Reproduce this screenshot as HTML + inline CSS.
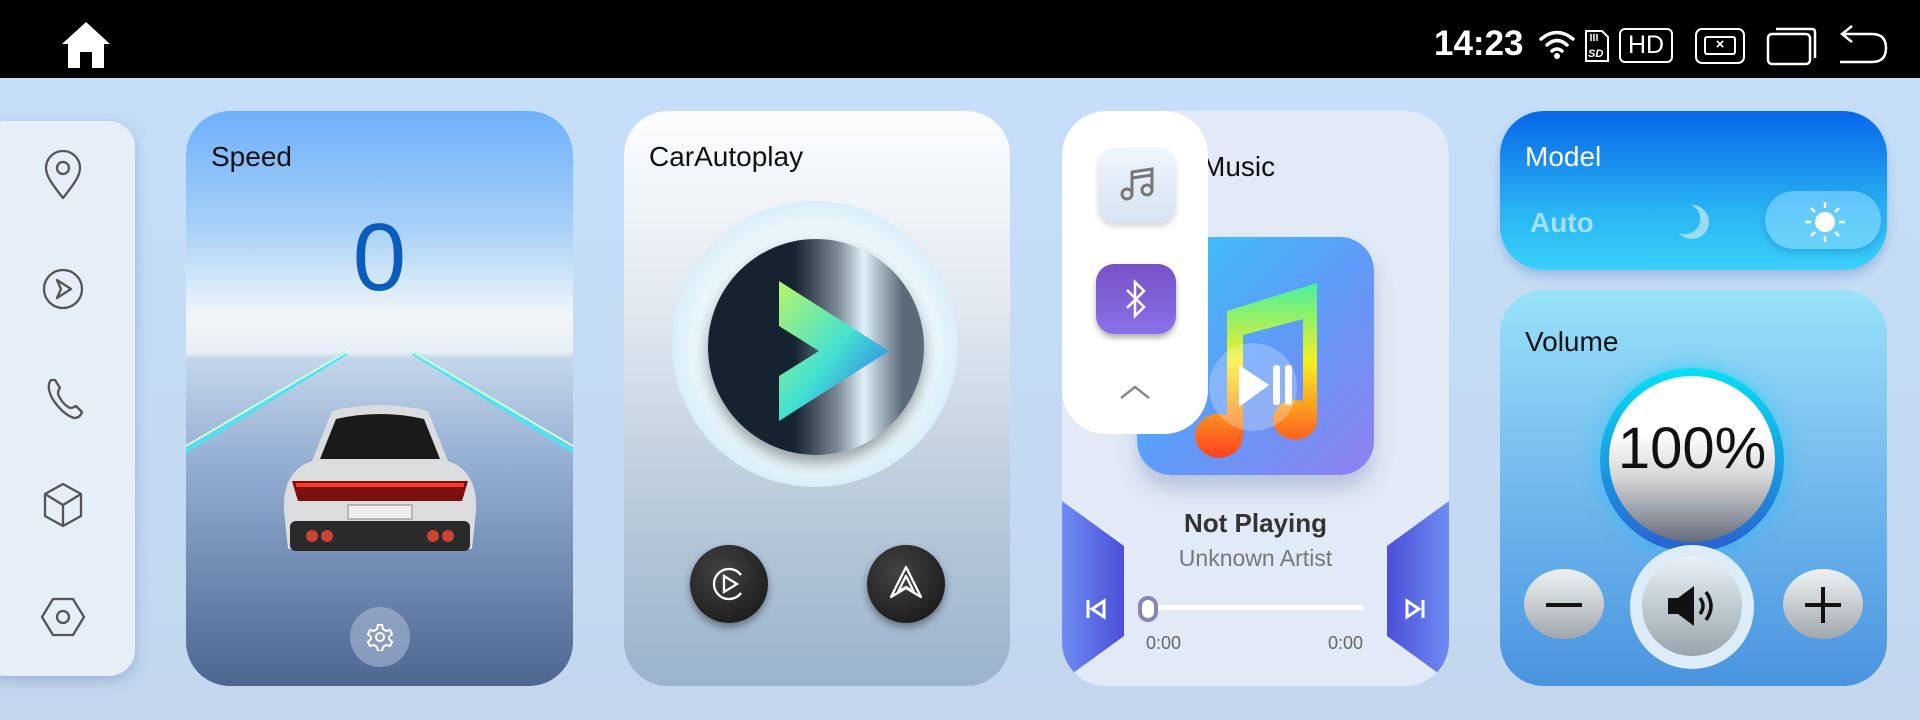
<!DOCTYPE html>
<html><head><meta charset="utf-8"><style>
*{margin:0;padding:0;box-sizing:border-box}
body{width:1920px;height:720px;overflow:hidden;background:linear-gradient(#c6e0fa,#c3d6ee);font-family:"Liberation Sans",sans-serif;position:relative}
.abs{position:absolute}
.top{left:0;top:0;width:1920px;height:78px;background:#000}
.card{position:absolute;border-radius:44px;overflow:hidden}
.t{position:absolute;font-size:28px;color:#111}
.circ{position:absolute;border-radius:50%}
</style></head><body>
<div class="abs top">
<svg class="abs" style="left:60px;top:20px" width="52" height="50" viewBox="0 0 52 50"><path d="M26 2 L50 24 L44 24 L44 48 L32 48 L32 32 L20 32 L20 48 L8 48 L8 24 L2 24 Z" fill="#fff"/></svg>
<div class="abs" style="left:1434px;top:24px;color:#fff;font-size:35px;font-weight:bold">14:23</div>
<svg class="abs" style="left:1537px;top:28px" width="40" height="32" viewBox="0 0 40 32"><g fill="none" stroke="#fff" stroke-width="3.5" stroke-linecap="round"><path d="M4 11 Q20 -2 36 11"/><path d="M10 17 Q20 8 30 17"/><path d="M15 23 Q20 19 25 23"/></g><circle cx="20" cy="28" r="3" fill="#fff"/></svg>
<svg class="abs" style="left:1584px;top:29px" width="26" height="34" viewBox="0 0 26 34"><path d="M2 2 H18 L24 8 V32 H2 Z" fill="none" stroke="#fff" stroke-width="2"/><path d="M7 5v7M10 5v7M13 5v7" stroke="#fff" stroke-width="1.5"/><text x="4" y="28" font-size="11" font-weight="bold" font-style="italic" fill="#fff" font-family="Liberation Sans">SD</text></svg>
<div class="abs" style="left:1619px;top:28px;width:54px;height:35px;border:2.5px solid #fff;border-radius:6px;color:#fff;font-size:25px;line-height:30px;text-align:center">HD</div>
<div class="abs" style="left:1695px;top:28px;width:50px;height:36px;border:2.5px solid #fff;border-radius:7px"><div style="margin:6px auto 0;width:32px;height:19px;border:2.5px solid #fff;border-radius:3px;color:#fff;font-size:15px;line-height:13px;text-align:center;font-weight:bold">×</div></div>
<svg class="abs" style="left:1766px;top:26px" width="52" height="40" viewBox="0 0 52 40"><rect x="2" y="8" width="42" height="30" rx="4" fill="none" stroke="#fff" stroke-width="2.5"/><path d="M10 3 H46 Q49 3 49 6 V32" fill="none" stroke="#fff" stroke-width="2.5"/></svg>
<svg class="abs" style="left:1838px;top:22px" width="52" height="42" viewBox="0 0 52 42"><path d="M14 4 L4 12 L14 20 M4 12 H34 Q48 12 48 26 Q48 40 34 40 H2" fill="none" stroke="#fff" stroke-width="2.5"/></svg>
</div>

<!-- sidebar -->
<div class="abs" style="left:-20px;top:121px;width:155px;height:555px;border-radius:26px;background:#e6eef8;box-shadow:0 4px 14px rgba(80,110,160,.35)"></div>
<svg class="abs" style="left:40px;top:150px" width="46" height="500" viewBox="0 0 46 500" fill="none" stroke="#555" stroke-width="2.3" stroke-linejoin="round">
<path d="M23 48 C12 34 6 26 6 18 A17 17 0 0 1 40 18 C40 26 34 34 23 48Z"/><circle cx="23" cy="18" r="6"/>
<circle cx="23" cy="139" r="19"/><path d="M17 130 L31 139 L17 148 L21 139Z"/>
<path d="M11 230 Q6 236 12 248 Q22 264 34 268 Q40 268 42 262 L36 256 Q33 258 30 258 Q22 254 18 244 Q18 240 20 238 L15 230 Z"/>
<path d="M23 334 L41 344 V366 L23 376 L5 366 V344 Z M5 344 L23 355 L41 344 M23 355 V376"/>
<path d="M13 449 H33 L44 467 L33 485 H13 L2 467 Z"/><circle cx="23" cy="467" r="6"/>
</svg>

<!-- speed card -->
<div class="card" style="left:186px;top:111px;width:387px;height:575px;background:linear-gradient(#6fb0fb 0%,#a6d0f8 20%,#f2f6f8 36%,#e6eef5 42%,#c4d6ea 43%,#92acd2 62%,#4c6690 100%)">
<svg class="abs" style="left:0;top:240px" width="387" height="120" viewBox="0 0 387 120"><path d="M160 2 L0 100 M227 2 L387 100" stroke="#4ee3f0" stroke-width="4"/><path d="M162 0 L0 95 M225 0 L387 95" stroke="#c8ffe0" stroke-width="2"/></svg>
<div class="t" style="left:25px;top:30px">Speed</div>
<div class="abs" style="left:0;width:387px;top:92px;text-align:center;font-size:96px;color:#0b5dbd">0</div>
<svg class="abs" style="left:96px;top:290px" width="196" height="160" viewBox="0 0 196 160">
<path d="M50 10 Q98 -2 146 10 L166 60 Q196 70 194 110 L190 148 L6 148 L2 110 Q0 70 30 60Z" fill="#dadcde"/>
<path d="M54 18 Q98 8 142 18 L158 58 L38 58Z" fill="#1a1a1a"/>
<path d="M10 80 L186 80 L180 100 L16 100Z" fill="#7a1010"/><path d="M14 84 H182" stroke="#ff3a2a" stroke-width="4"/>
<rect x="66" y="104" width="64" height="14" fill="#eee" stroke="#888"/>
<rect x="8" y="120" width="180" height="30" rx="6" fill="#2a2a2a"/>
<circle cx="30" cy="135" r="6" fill="#c43"/><circle cx="45" cy="135" r="6" fill="#c43"/><circle cx="151" cy="135" r="6" fill="#c43"/><circle cx="166" cy="135" r="6" fill="#c43"/>
</svg>
<div class="circ" style="left:164px;top:496px;width:60px;height:60px;background:rgba(170,185,215,.6)"></div>
<svg class="abs" style="left:180px;top:512px" width="28" height="28" viewBox="0 0 28 28" fill="none" stroke="#fff" stroke-width="2"><circle cx="14" cy="14" r="4"/><path d="M12 2h4l1 4 3 2 4-1 2 4-3 3v2l3 3-2 4-4-1-3 2-1 4h-4l-1-4-3-2-4 1-2-4 3-3v-2l-3-3 2-4 4 1 3-2z"/></svg>
</div>

<!-- carautoplay -->
<div class="card" style="left:624px;top:111px;width:386px;height:575px;background:linear-gradient(#fcfdfe 0%,#e0e8f0 35%,#b8c9da 70%,#9ab3cb 100%)">
<div class="t" style="left:25px;top:30px">CarAutoplay</div>
<div class="circ" style="left:48px;top:90px;width:286px;height:286px;background:radial-gradient(#e8f6fc 60%,#b4d6ea 100%)"></div>
<div class="circ" style="left:84px;top:128px;width:216px;height:216px;background:linear-gradient(90deg,#14232f 40%,#7b8a96 60%,#e0f0f8 72%,#5a6a78 90%);box-shadow:0 8px 14px rgba(0,0,0,.35)"></div>
<svg class="abs" style="left:155px;top:170px" width="110" height="140" viewBox="0 0 110 140"><defs><linearGradient id="g1" x1="0" y1="0" x2="1" y2="1"><stop offset="0" stop-color="#b6f56a"/><stop offset=".5" stop-color="#44e2d0"/><stop offset="1" stop-color="#2a5cf0"/></linearGradient></defs><path d="M0 0 L110 70 L0 140 L0 95 L40 70 L0 45Z" fill="url(#g1)"/></svg>
<div class="circ" style="left:66px;top:434px;width:78px;height:78px;background:radial-gradient(circle at 40% 35%,#444,#111);box-shadow:0 4px 8px rgba(0,0,0,.4)"></div>
<svg class="abs" style="left:87px;top:455px" width="36" height="36" viewBox="0 0 36 36" fill="none" stroke="#fff" stroke-width="2.3"><path d="M30 9 A15 15 0 1 0 30 27"/><path d="M13 10 L26 18 L13 26Z"/></svg>
<div class="circ" style="left:243px;top:434px;width:78px;height:78px;background:radial-gradient(circle at 40% 35%,#444,#111);box-shadow:0 4px 8px rgba(0,0,0,.4)"></div>
<svg class="abs" style="left:264px;top:453px" width="36" height="38" viewBox="0 0 36 38" fill="none" stroke="#fff" stroke-width="2.3" stroke-linejoin="round"><path d="M18 3 L33 33 L18 24 L3 33 Z M18 12 L26 28 L18 23 L10 28Z"/></svg>
</div>

<!-- music -->
<div class="card" style="left:1062px;top:111px;width:387px;height:575px;background:#e2eaf7">
<div class="abs" style="left:0;top:390px;width:62px;height:180px;background:linear-gradient(90deg,#6e8cf2,#4b4fd8);clip-path:polygon(0 0,100% 45px,100% 135px,0 180px)"></div>
<div class="abs" style="left:325px;top:390px;width:62px;height:180px;background:linear-gradient(90deg,#4b4fd8,#6e8cf2);clip-path:polygon(0 45px,100% 0,100% 180px,0 135px)"></div>
<svg class="abs" style="left:23px;top:487px" width="22" height="22" viewBox="0 0 22 22"><path d="M3 2v18M19 3 L7 11 L19 19Z" stroke="#fff" stroke-width="3" fill="none"/></svg>
<svg class="abs" style="left:342px;top:487px" width="22" height="22" viewBox="0 0 22 22"><path d="M19 2v18M3 3 L15 11 L3 19Z" stroke="#fff" stroke-width="3" fill="none"/></svg>
<div class="t" style="left:140px;top:40px">Music</div>
<div class="abs" style="left:75px;top:126px;width:237px;height:238px;border-radius:34px;background:linear-gradient(135deg,#36c8f8,#5d9cf8 50%,#9081f0);box-shadow:0 14px 20px rgba(90,110,160,.3)"></div>
<svg class="abs" style="left:125px;top:150px" width="150" height="200" viewBox="0 0 150 200"><defs><linearGradient id="g2" x1="0" y1="0" x2="0" y2="1"><stop offset="0" stop-color="#48f0a0"/><stop offset=".45" stop-color="#f5f020"/><stop offset="1" stop-color="#ff4020"/></linearGradient></defs><path d="M40 50 L130 22 L130 160 A22 20 0 1 1 116 140 L116 58 L56 74 L56 175 A24 22 0 1 1 40 154Z" fill="url(#g2)"/><circle cx="66" cy="126" r="44" fill="rgba(255,255,255,.25)"/><path d="M52 104 L82 124 L52 146Z" fill="#fff"/><rect x="86" y="104" width="7" height="40" rx="3" fill="#fff"/><rect x="98" y="104" width="7" height="40" rx="3" fill="#fff"/></svg>
<div class="abs" style="left:0;width:387px;top:397px;text-align:center;font-size:26px;font-weight:bold;color:#333">Not Playing</div>
<div class="abs" style="left:0;width:387px;top:434px;text-align:center;font-size:23px;color:#777">Unknown Artist</div>
<div class="abs" style="left:82px;top:494px;width:220px;height:5px;background:#fff;border-radius:3px"></div>
<div class="abs" style="left:76px;top:485px;width:20px;height:26px;border-radius:10px;border:4px solid #8a84b8;background:#fff"></div>
<div class="abs" style="left:84px;top:522px;font-size:18px;color:#666">0:00</div>
<div class="abs" style="left:266px;top:522px;font-size:18px;color:#666">0:00</div>
<div class="abs" style="left:0;top:0;width:146px;height:323px;background:#fff;border-radius:44px"></div>
<div class="abs" style="left:36px;top:36px;width:78px;height:76px;border-radius:18px;background:linear-gradient(#f0f6fe,#d6e4f2);box-shadow:0 4px 6px rgba(0,0,0,.15)"></div>
<svg class="abs" style="left:57px;top:56px" width="36" height="34" viewBox="0 0 36 34" fill="none" stroke="#777" stroke-width="3"><circle cx="8" cy="27" r="5"/><circle cx="28" cy="23" r="5"/><path d="M13 27 V5 L33 2 V23 M13 11 L33 8"/></svg>
<div class="abs" style="left:34px;top:153px;width:80px;height:70px;border-radius:18px;background:linear-gradient(#7652c8,#8a70e8);box-shadow:0 4px 6px rgba(0,0,0,.3)"></div>
<svg class="abs" style="left:62px;top:168px" width="24" height="40" viewBox="0 0 24 40" fill="none" stroke="#fff" stroke-width="2.5"><path d="M3 11 L20 28 L11 37 V3 L20 12 L3 29"/></svg>
<svg class="abs" style="left:57px;top:273px" width="32" height="16" viewBox="0 0 32 16"><path d="M2 14 L16 3 L30 14" fill="none" stroke="#888" stroke-width="2.5"/></svg>
</div>

<!-- model -->
<div class="card" style="left:1500px;top:111px;width:387px;height:159px;border-radius:44px;background:linear-gradient(#0766e8,#2ab6f4 65%,#3ad0f8);box-shadow:0 6px 10px rgba(60,110,180,.3)">
<div class="t" style="left:25px;top:30px;color:#fff">Model</div>
<div class="abs" style="left:30px;top:96px;font-size:28px;color:rgba(255,255,255,.55);font-weight:bold">Auto</div>
<svg class="abs" style="left:175px;top:90px" width="40" height="40" viewBox="0 0 40 40"><path d="M16 4 A17 17 0 1 1 4 32 A15 15 0 0 0 16 4Z" fill="#9adcf8"/></svg>
<div class="abs" style="left:265px;top:80px;width:116px;height:58px;border-radius:29px;background:rgba(150,220,255,.55);box-shadow:0 4px 8px rgba(0,60,140,.2)"></div>
<svg class="abs" style="left:303px;top:89px" width="44" height="44" viewBox="0 0 44 44"><circle cx="22" cy="22" r="10" fill="#fff"/><g stroke="#fff" stroke-width="2.5"><path d="M22 2v6M22 36v6M2 22h6M36 22h6M8 8l4 4M32 32l4 4M8 36l4-4M32 12l4-4"/></g></svg>
</div>

<!-- volume -->
<div class="card" style="left:1500px;top:290px;width:387px;height:396px;background:linear-gradient(#98e2f8,#76bdee 45%,#4a94e0)">
<div class="t" style="left:25px;top:36px">Volume</div>
<div class="circ" style="left:100px;top:78px;width:184px;height:184px;background:linear-gradient(#06e0f4,#2a60d0);box-shadow:0 0 20px rgba(0,200,255,.5)"></div>
<div class="circ" style="left:109px;top:86px;width:166px;height:166px;background:linear-gradient(#fff 35%,#d8d8d8 60%,#656d7c)"></div>
<div class="abs" style="left:100px;width:184px;top:125px;text-align:center;font-size:58px;color:#111">100%</div>
<div class="circ" style="left:130px;top:255px;width:124px;height:124px;background:#dcecf8"></div>
<div class="circ" style="left:142px;top:266px;width:100px;height:100px;background:linear-gradient(#e8f2f8,#9aa4ac)"></div>
<svg class="abs" style="left:166px;top:294px" width="56" height="44" viewBox="0 0 56 44"><path d="M2 14 H12 L28 2 V42 L12 30 H2Z" fill="#111"/><path d="M34 14 Q40 22 34 30 M40 8 Q50 22 40 36" fill="none" stroke="#111" stroke-width="3.5"/></svg>
<div class="circ" style="left:24px;top:279px;width:80px;height:70px;background:linear-gradient(#eef2f4,#a0a8ae)"></div>
<div class="abs" style="left:46px;top:313px;width:36px;height:4px;background:#111"></div>
<div class="circ" style="left:283px;top:279px;width:80px;height:70px;background:linear-gradient(#eef2f4,#a0a8ae)"></div>
<div class="abs" style="left:305px;top:313px;width:36px;height:4px;background:#111"></div>
<div class="abs" style="left:321px;top:297px;width:4px;height:36px;background:#111"></div>
</div>
</body></html>
